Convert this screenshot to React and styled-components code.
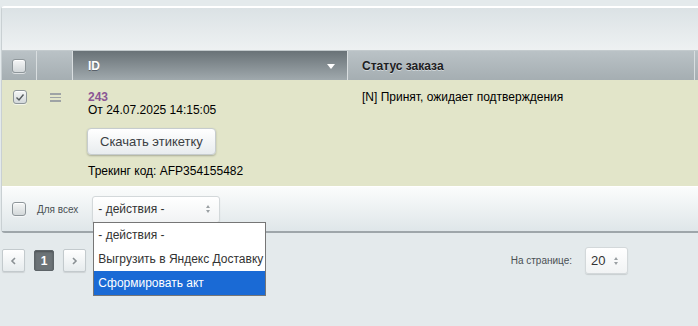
import React from 'react';
import styled, { createGlobalStyle } from 'styled-components';

const GlobalStyle = createGlobalStyle`
  html {
    overflow: hidden;
  }
  body {
    margin: 0;
    min-height: 326px;
    background: #e4eaec;
    font-family: "Liberation Sans", Arial, sans-serif;
    font-size: 12px;
    color: #000;
  }
`;

const Page = styled.div`
  padding: 6px 0 0 1px;
  width: 760px;
`;

const Panel = styled.div`
  position: relative;
  border-radius: 4px 0 0 4px;
  border-top: 2px solid #fff;
  border-left: 1px solid #c9d0d3;
  box-shadow: inset 1px 0 0 #fff;
  border-bottom: 2px solid #9ea6aa;
  background: #e7ecee;
`;

const Toolbar = styled.div`
  height: 42px;
  background: linear-gradient(to bottom, #dbe2e5 0%, #eef1f2 100%);
  border-bottom: 1px solid #c3cacd;
`;

const Row = styled.div`
  display: grid;
  grid-template-columns: 35px 36px 275px 347px 1fr;
`;

const HeadCell = styled.div`
  height: 29px;
  display: flex;
  align-items: center;
  box-sizing: border-box;
  padding-left: ${p => p.$pad || 0}px;
  padding-right: ${p => (p.$between ? 12 : 0)}px;
  justify-content: ${p => (p.$between ? 'space-between' : p.$center ? 'center' : 'flex-start')};
  font-weight: bold;
  font-size: 12px;
  border-right: 1px solid #d9dee0;
  background: ${p =>
    p.$dark
      ? 'linear-gradient(to bottom, #697277 0%, #a0a9ad 100%)'
      : 'linear-gradient(to bottom, #bac2c6 0%, #a5aeb2 100%)'};
  color: ${p => (p.$dark ? '#fff' : '#1d2022')};
  text-shadow: ${p => (p.$dark ? '0 1px 0 #59616a' : '0 1px 0 #d0d6d8')};
`;

const SortArrow = styled.span`
  width: 0;
  height: 0;
  border-left: 4px solid transparent;
  border-right: 4px solid transparent;
  border-top: 5px solid #fff;
  margin-top: 2px;
`;

const Checkbox = styled.span`
  display: inline-flex;
  flex: none;
  align-items: center;
  justify-content: center;
  width: 12px;
  height: 12px;
  border: 1px solid #8e969a;
  border-radius: 3px;
  background: linear-gradient(to bottom, #f5f6f6 0%, #d3d8da 100%);
  box-shadow: inset 0 1px 0 #fff, 0 1px 0 rgba(255, 255, 255, 0.6);
`;

const DataCell = styled.div`
  background: #e2e5c9;
  min-height: 106px;
  box-sizing: border-box;
  padding: ${p => p.$pad || '0'};
  display: flex;
  flex-direction: column;
  align-items: ${p => (p.$center ? 'center' : 'flex-start')};
`;

const OrderId = styled.a`
  display: block;
  color: #8b5595;
  font-weight: bold;
  line-height: 13px;
  text-decoration: none;
`;

const Line = styled.div`
  line-height: 13px;
`;

const LabelButton = styled.button`
  margin: 11px 0 10px -1px;
  height: 27px;
  padding: 0 12px;
  font-family: inherit;
  font-size: 13px;
  color: #3b4043;
  border: 1px solid #c6ccce;
  border-radius: 4px;
  background: linear-gradient(to bottom, #ffffff 0%, #e8ecee 100%);
  box-shadow: 0 1px 2px rgba(0, 0, 0, 0.25);
`;

const Burger = styled.div`
  margin-top: 13px;
  display: flex;
  flex-direction: column;
  gap: 2px;
  span {
    display: block;
    width: 11px;
    height: 1.5px;
    background: #9ea3a5;
  }
`;

const Footer = styled.div`
  height: 44px;
  display: flex;
  align-items: center;
  padding-left: 10px;
  border-top: 1px solid #fff;
  background: linear-gradient(to bottom, #fbfcfc 0%, #dfe6e9 100%);
  position: relative;
`;

const Small = styled.span`
  font-size: 10px;
  color: #4a5054;
  margin: 0 14px 0 11px;
`;

const Select = styled.div`
  position: relative;
  box-sizing: border-box;
  width: ${p => p.$w}px;
  height: 27px;
  display: flex;
  align-items: center;
  justify-content: space-between;
  padding: 0 9px 0 5px;
  font-size: ${p => p.$fs || 12}px;
  color: #333;
  background: linear-gradient(to bottom, #fff 0%, #f1f3f4 100%);
  border: 1px solid #d3d8da;
  border-radius: 3px;
  box-shadow: 0 1px 1px rgba(0, 0, 0, 0.12);
`;

const Spinner = styled.span`
  display: flex;
  flex-direction: column;
  gap: 2px;
  &::before,
  &::after {
    content: '';
    width: 0;
    height: 0;
    border-left: 2.5px solid transparent;
    border-right: 2.5px solid transparent;
  }
  &::before {
    border-bottom: 3px solid #9aa0a3;
  }
  &::after {
    border-top: 3px solid #9aa0a3;
  }
`;

const Menu = styled.ul`
  position: absolute;
  left: 0;
  top: 25px;
  margin: 0;
  padding: 0;
  list-style: none;
  width: 173px;
  box-sizing: border-box;
  background: #fff;
  border: 1px solid #767676;
  z-index: 2;
`;

const MenuItem = styled.li`
  height: 24px;
  line-height: 24px;
  padding-left: 4px;
  font-size: 12px;
  white-space: nowrap;
  color: ${p => (p.$active ? '#fff' : '#333')};
  background: ${p => (p.$active ? '#1a6ad5' : 'transparent')};
`;

const Pager = styled.div`
  display: flex;
  align-items: center;
  padding: 14px 0 0 1px;
  width: 626px;
`;

const PageBtn = styled.div`
  box-sizing: border-box;
  width: ${p => (p.$current ? 20 : 23)}px;
  height: ${p => (p.$current ? 21 : 23)}px;
  margin-right: 9px;
  display: flex;
  align-items: center;
  justify-content: center;
  font-size: 12px;
  font-weight: bold;
  color: ${p => (p.$current ? '#fff' : '#8a9094')};
  border-radius: 2px;
  border: 1px solid ${p => (p.$current ? '#5d6468' : '#c3cacd')};
  background: ${p =>
    p.$current ? '#6c7377' : 'linear-gradient(to bottom, #fff 0%, #e6ebed 100%)'};
  box-shadow: ${p => (p.$current ? 'inset 0 1px 2px rgba(0,0,0,0.3)' : '0 1px 1px rgba(0,0,0,0.1)')};
`;

const PerPage = styled.div`
  margin-left: auto;
  display: flex;
  align-items: center;
  gap: 13px;
  font-size: 10px;
  color: #4a5054;
`;

const ChevronL = () => (
  <svg width="7" height="8" viewBox="0 0 7 8">
    <path d="M5 1 L2 4 L5 7" fill="none" stroke="#8a9094" strokeWidth="1.6" />
  </svg>
);

const ChevronR = () => (
  <svg width="7" height="8" viewBox="0 0 7 8">
    <path d="M2 1 L5 4 L2 7" fill="none" stroke="#8a9094" strokeWidth="1.6" />
  </svg>
);

const Tick = () => (
  <svg width="10" height="9" viewBox="0 0 10 9">
    <path d="M1.5 4.5 L4 7 L8.5 1.5" fill="none" stroke="#555b5e" strokeWidth="1.4" />
  </svg>
);

const App = () => (
  <>
    <GlobalStyle />
    <Page>
      <Panel>
        <Toolbar />
        <Row>
          <HeadCell $center>
            <Checkbox />
          </HeadCell>
          <HeadCell />
          <HeadCell $dark $pad={15} $between>
            <span>ID</span>
            <SortArrow />
          </HeadCell>
          <HeadCell $pad={14}>Статус заказа</HeadCell>
          <HeadCell />
        </Row>
        <Row>
          <DataCell $center $pad="10px 0 0 0">
            <Checkbox>
              <Tick />
            </Checkbox>
          </DataCell>
          <DataCell $center>
            <Burger>
              <span />
              <span />
              <span />
            </Burger>
          </DataCell>
          <DataCell $pad="11px 0 0 15px">
            <OrderId href="#">243</OrderId>
            <Line>От 24.07.2025 14:15:05</Line>
            <LabelButton>Скачать этикетку</LabelButton>
            <Line>Трекинг код: AFP354155482</Line>
          </DataCell>
          <DataCell $pad="11px 0 0 14px">
            <Line>[N] Принят, ожидает подтверждения</Line>
          </DataCell>
          <DataCell />
        </Row>
        <Footer>
          <Checkbox />
          <Small>Для всех</Small>
          <Select $w={128}>
            <span>- действия -</span>
            <Spinner />
            <Menu>
              <MenuItem>- действия -</MenuItem>
              <MenuItem>Выгрузить в Яндекс Доставку</MenuItem>
              <MenuItem $active>Сформировать акт</MenuItem>
            </Menu>
          </Select>
        </Footer>
      </Panel>
      <Pager>
        <PageBtn>
          <ChevronL />
        </PageBtn>
        <PageBtn $current>1</PageBtn>
        <PageBtn>
          <ChevronR />
        </PageBtn>
        <PerPage>
          <span>На странице:</span>
          <Select $w={43} $fs={13}>
            <span>20</span>
            <Spinner />
          </Select>
        </PerPage>
      </Pager>
    </Page>
  </>
);

export default App;
